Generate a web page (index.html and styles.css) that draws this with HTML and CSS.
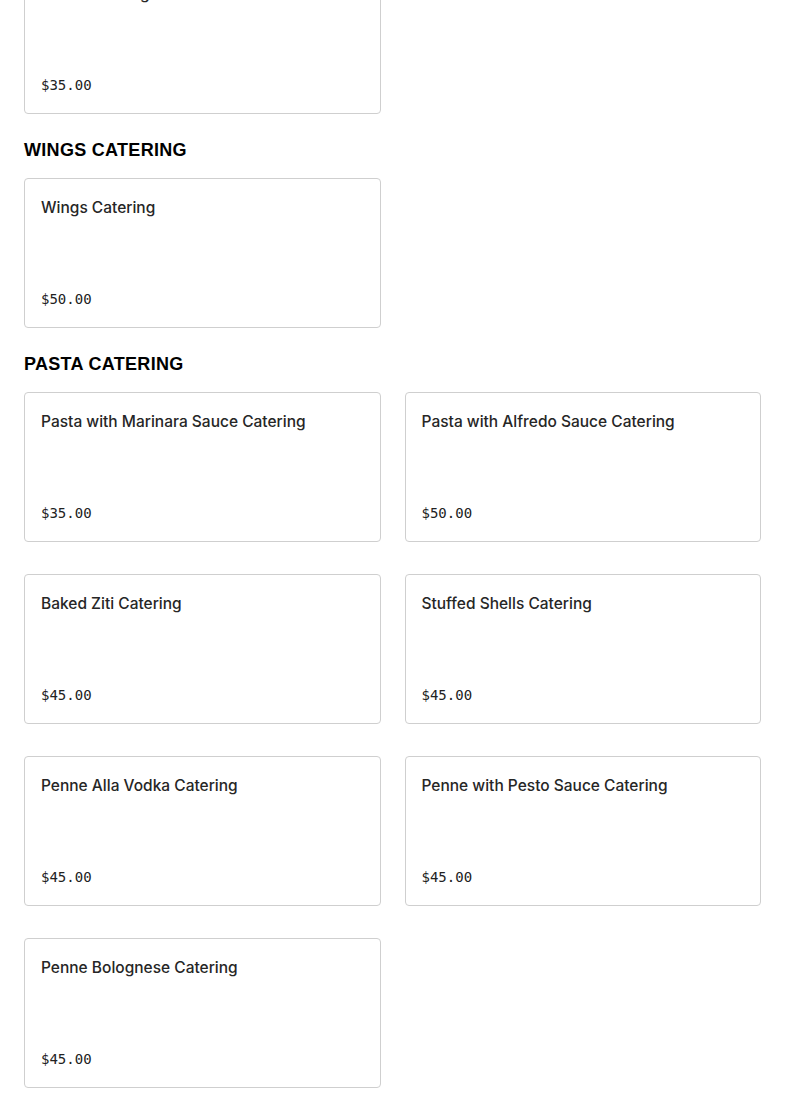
FILE: index.html
```html
<!DOCTYPE html>
<html lang="en">
<head>
<meta charset="utf-8">
<title>Catering Menu</title>
<link rel="stylesheet" href="styles.css">
</head>
<body>
<main class="menu">
  <section class="category category--first">
    <div class="grid">
      <div class="card"><div class="card-title">Salad Catering</div><div class="card-price">$35.00</div></div>
    </div>
  </section>
  <section class="category">
    <h2 class="category-title">WINGS CATERING</h2>
    <div class="grid">
      <div class="card"><div class="card-title">Wings Catering</div><div class="card-price">$50.00</div></div>
    </div>
  </section>
  <section class="category">
    <h2 class="category-title">PASTA CATERING</h2>
    <div class="grid">
      <div class="card"><div class="card-title">Pasta with Marinara Sauce Catering</div><div class="card-price">$35.00</div></div>
      <div class="card"><div class="card-title">Pasta with Alfredo Sauce Catering</div><div class="card-price">$50.00</div></div>
      <div class="card"><div class="card-title">Baked Ziti Catering</div><div class="card-price">$45.00</div></div>
      <div class="card"><div class="card-title">Stuffed Shells Catering</div><div class="card-price">$45.00</div></div>
      <div class="card"><div class="card-title">Penne Alla Vodka Catering</div><div class="card-price">$45.00</div></div>
      <div class="card"><div class="card-title">Penne with Pesto Sauce Catering</div><div class="card-price">$45.00</div></div>
      <div class="card"><div class="card-title">Penne Bolognese Catering</div><div class="card-price">$45.00</div></div>
    </div>
  </section>
</main>
</body>
</html>
```
FILE: styles.css
```css
html, body {
  margin: 0;
  padding: 0;
  background: #fff;
  color: #1f1f1f;
  font-family: "Inter", "Liberation Sans", sans-serif;
}
.menu {
  padding: 0 24px 40px;
  margin-top: -36px;
}
.category {
  padding-top: 24px;
}
.category--first {
  padding-top: 0;
}
.category-title {
  margin: 0 0 16px;
  font-family: "Liberation Sans", "Inter", sans-serif;
  font-weight: 900;
  font-size: 18px;
  line-height: 24px;
  color: #000;
  letter-spacing: 0.3px;
}
.grid {
  display: grid;
  grid-template-columns: 1fr 1fr;
  column-gap: 24px;
  row-gap: 32px;
}
.card {
  box-sizing: border-box;
  height: 150px;
  border: 1px solid #cfcfcf;
  border-radius: 4px;
  padding: 16px;
  display: flex;
  flex-direction: column;
  justify-content: space-between;
}
.card-title {
  font-size: 15.5px;
  line-height: 26px;
  font-weight: 500;
  color: #262626;
}
.card-price {
  font-family: "DejaVu Sans Mono", "Liberation Mono", monospace;
  font-size: 14px;
  line-height: 24px;
  color: #222;
}
```
